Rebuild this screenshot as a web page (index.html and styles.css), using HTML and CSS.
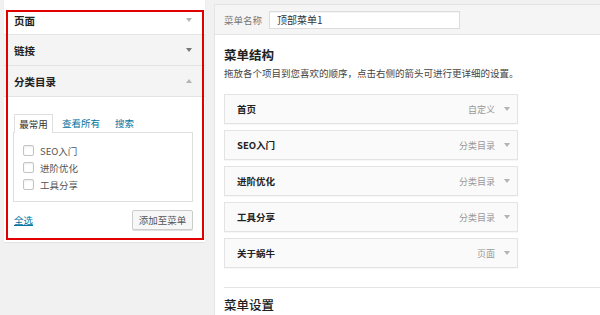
FILE: index.html
```html
<!DOCTYPE html>
<html lang="zh-CN">
<head>
    <meta charset="UTF-8">
    <title>菜单</title>
    <link rel="stylesheet" href="styles.css">
</head>
<body>
<div class="wrap">
    <div class="side">
        <div class="acc-head first">页面 <span class="arrow down"></span></div>
        <div class="acc-head shade">链接 <span class="arrow down dark"></span></div>
        <div class="acc-head shade">分类目录 <span class="arrow up"></span></div>
        <div class="acc-body">
            <div class="tabs">
                <span class="tab active">最常用</span>
                <a class="tab" href="#">查看所有</a>
                <a class="tab" href="#">搜索</a>
            </div>
            <div class="tab-panel">
                <label class="check"><span class="box"></span>SEO入门</label>
                <label class="check"><span class="box"></span>进阶优化</label>
                <label class="check"><span class="box"></span>工具分享</label>
            </div>
            <div class="actions">
                <a href="#" class="select-all">全选</a>
                <button class="btn">添加至菜单</button>
            </div>
        </div>
        <!-- red annotation frame -->
        <div class="mark"></div>
    </div>

    <div class="main">
        <div class="menu-head">
            <span class="name-label">菜单名称</span>
            <input class="name-input" type="text" value="顶部菜单1">
        </div>
        <div class="menu-body">
            <h3 class="title">菜单结构</h3>
            <p class="hint">拖放各个项目到您喜欢的顺序，点击右侧的箭头可进行更详细的设置。</p>

            <div class="item"><b>首页</b><span class="type">自定义<span class="arrow down"></span></span></div>
            <div class="item"><b>SEO入门</b><span class="type">分类目录<span class="arrow down"></span></span></div>
            <div class="item"><b>进阶优化</b><span class="type">分类目录<span class="arrow down"></span></span></div>
            <div class="item"><b>工具分享</b><span class="type">分类目录<span class="arrow down"></span></span></div>
            <div class="item"><b>关于蜗牛</b><span class="type">页面<span class="arrow down"></span></span></div>

            <div class="settings">
                <h3 class="title light">菜单设置</h3>
            </div>
        </div>
    </div>
</div>
</body>
</html>
```

FILE: styles.css
```css
body {
    margin: 0;
    background-color: #f1f1f1;
    font-family: "Noto Sans CJK SC", "DejaVu Sans", sans-serif;
    font-size: 9.5px;
    color: #444;
    overflow: hidden;
}
.wrap {
    display: flex;
    gap: 9px;
    padding-left: 4px;
    height: 315px;
}
/* left column */
.side {
    position: relative;
    width: 201px;
    height: 242px;
    background-color: #fff;
    box-shadow: 0 1px 1px rgba(0,0,0,0.05);
    flex-shrink: 0;
}
.acc-head {
    display: flex;
    align-items: center;
    justify-content: space-between;
    height: 31px;
    box-sizing: border-box;
    padding: 0 13px 0 10px;
    border-bottom: 1px solid #e3e3e3;
    font-size: 10.5px;
    font-weight: bold;
    color: #222;
}
.acc-head.first {
    height: 35px;
    padding-top: 6px;
}
.acc-head.shade {
    background-color: #f4f4f4;
}
.arrow {
    display: inline-block;
    width: 0;
    height: 0;
    border-left: 3px solid transparent;
    border-right: 3px solid transparent;
}
.arrow.down {
    border-top: 4px solid #b4b4b4;
}
.arrow.down.dark {
    border-top-color: #777;
}
.arrow.up {
    border-bottom: 4px solid #b4b4b4;
}
.acc-body {
    padding: 16px 12px 0 9px;
}
.tabs {
    display: flex;
    align-items: flex-end;
    height: 19px;
    padding-left: 1px;
}
.tab {
    display: flex;
    align-items: center;
    height: 19px;
    box-sizing: border-box;
    padding: 0 6px;
    margin-right: 3px;
    color: #0074a2;
    text-decoration: none;
}
.tab.active {
    width: 39px;
    justify-content: center;
    padding: 0;
    color: #333;
    background-color: #fff;
    border: 1px solid #dfdfdf;
    border-bottom: none;
    position: relative;
    top: 1px;
    margin-right: 3px;
}
.tab-panel {
    border: 1px solid #dfdfdf;
    height: 70px;
    box-sizing: border-box;
    padding: 9px 9px 0;
}
.check {
    display: flex;
    align-items: center;
    height: 17px;
    color: #555;
}
.box {
    width: 11px;
    height: 11px;
    box-sizing: border-box;
    border: 1px solid #c4c4c4;
    border-radius: 2px;
    box-shadow: inset 0 1px 2px rgba(0,0,0,0.08);
    margin-right: 6px;
    background-color: #fff;
}
.actions {
    display: flex;
    align-items: center;
    justify-content: space-between;
    margin-top: 8px;
    padding-left: 1px;
}
.select-all {
    color: #0074a2;
}
.btn {
    width: 61px;
    height: 20px;
    padding: 0;
    font-family: inherit;
    font-size: 9.5px;
    color: #555;
    background-color: #f7f7f7;
    border: 1px solid #cccccc;
    border-radius: 2px;
    box-shadow: 0 1px 0 #e0e0e0;
}
.mark {
    position: absolute;
    left: 2px;
    top: 10px;
    width: 198px;
    height: 230px;
    box-sizing: border-box;
    border: 2px solid #e00000;
}
/* right column */
.main {
    flex: 1;
    margin-top: 4px;
    background-color: #fff;
    border-left: 1px solid #e5e5e5;
    border-top: 1px solid #e3e3e3;
}
.menu-head {
    display: flex;
    align-items: center;
    height: 30px;
    box-sizing: border-box;
    padding-left: 9px;
    background-color: #f5f5f5;
    border-bottom: 1px solid #e3e3e3;
}
.name-label {
    color: #777;
    width: 45px;
}
.name-input {
    width: 191px;
    height: 18px;
    box-sizing: border-box;
    padding: 0 7px;
    border: 1px solid #dcdcdc;
    box-shadow: inset 0 1px 1px rgba(0,0,0,0.04);
    font-family: inherit;
    font-size: 10px;
    color: #333;
}
.menu-body {
    padding-left: 9px;
}
.title {
    margin: 12px 0 0;
    height: 16px;
    line-height: 16px;
    font-size: 12.5px;
    font-weight: bold;
    color: #222;
}
.title.light {
    font-weight: 500;
    margin-top: 9px;
}
.hint {
    margin: 3px 0 14px;
    line-height: 14px;
    color: #444;
}
.item {
    display: flex;
    align-items: center;
    justify-content: space-between;
    width: 294px;
    height: 30px;
    box-sizing: border-box;
    margin-bottom: 6px;
    padding: 0 7px 0 12px;
    background-color: #fafafa;
    border: 1px solid #e3e3e3;
    box-shadow: 0 1px 1px rgba(0,0,0,0.03);
}
.item b {
    color: #222;
}
.type {
    display: flex;
    align-items: center;
    gap: 9px;
    color: #999;
    font-size: 9px;
}
.settings {
    margin-top: 19px;
    border-top: 1px solid #e5e5e5;
}
```
